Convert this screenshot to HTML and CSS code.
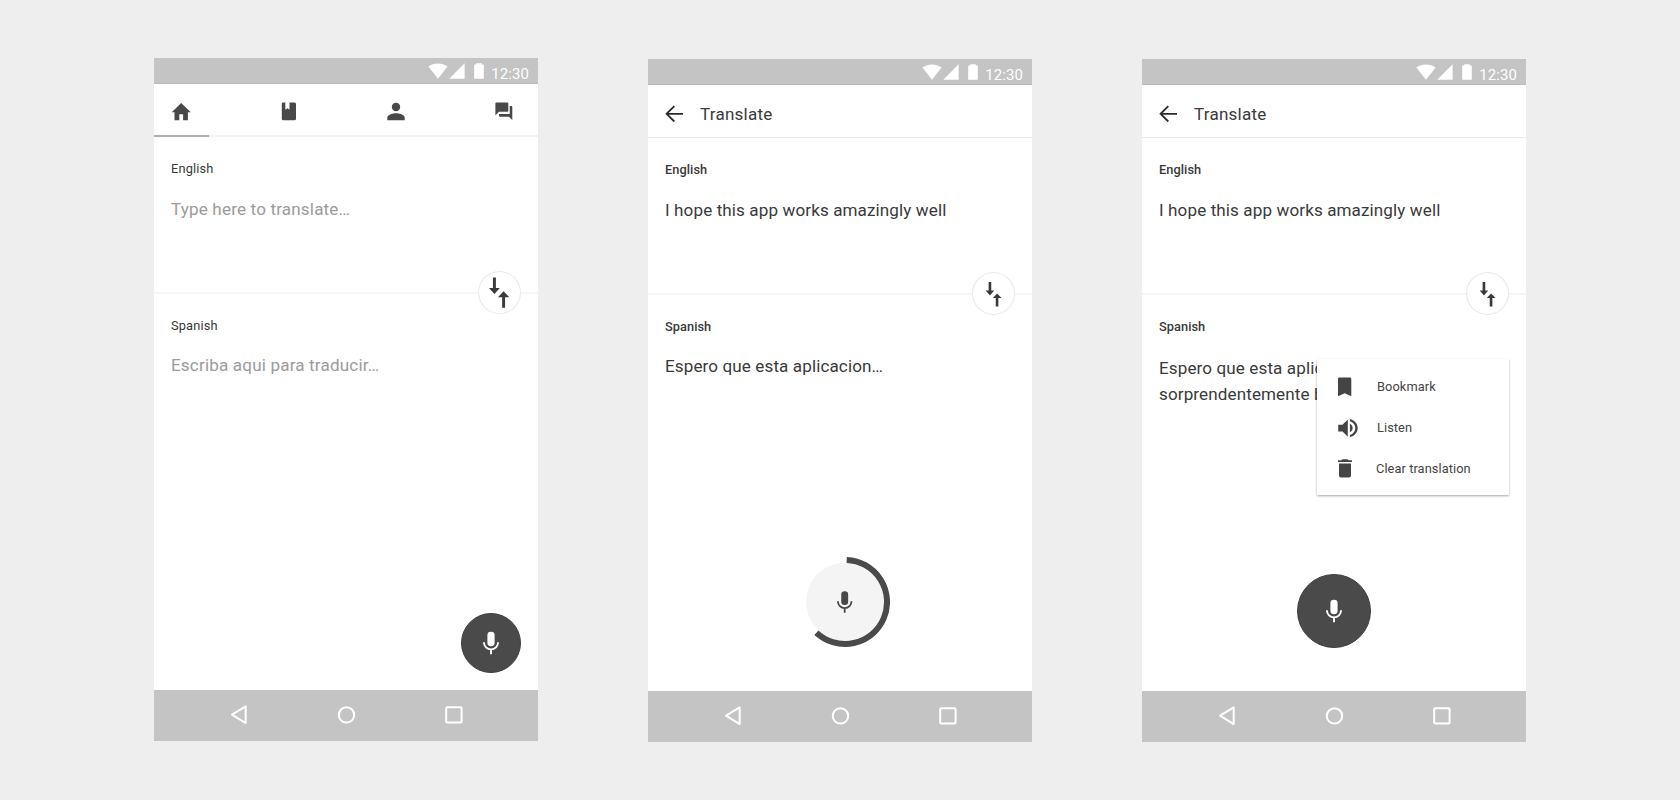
FILE: index.html
```html
<!DOCTYPE html>
<html lang="en">
<head>
<meta charset="utf-8">
<title>Translate</title>
<link rel="stylesheet" href="styles.css">
</head>
<body>
<svg class="sprite" aria-hidden="true">
  <symbol id="wifi" viewBox="0 0 20 16"><path d="M10 15.800 0.400 3.600C3.200 1.500 6.400 0.500 10 0.500s6.800 1 9.600 3.100z"/></symbol>
  <symbol id="signal" viewBox="0 0 16 16"><path d="M15.600 0.300V15.800H0.300z"/></symbol>
  <symbol id="battery" viewBox="0 0 10 16"><path d="M2.300 0.200h5.400v1.200h2.100v14.400H.2V1.400h2.100z"/></symbol>
  <symbol id="mic" viewBox="0 0 24 24">
    <rect x="8.400" y="0.800" width="7.200" height="14.400" rx="3.400" fill="currentColor"/>
    <path d="M4.900 11.300a7.100 7.100 0 0 0 14.200 0M12 18.400V23.200" fill="none" stroke="currentColor" stroke-width="1.900"/>
  </symbol>
  <symbol id="swap" viewBox="0 0 44 44"><path d="M17 10.300h2.700V19h3L18.400 24 14 19h3zM24.300 35.300V26.700h-3L25.700 22l4.500 4.700H27v8.600z"/></symbol>
  <symbol id="swap-large" viewBox="0 0 44 44"><path d="M15.300 6.700h3V17.500h4L16.800 23.500 11.300 17.500h4zM24.700 37.700V26.800h-4.300L26.200 20.700 32 26.800h-4.300v10.900z"/></symbol>
  <symbol id="back" viewBox="0 0 18 18"><path d="M9.300 1.100 1.600 8.800l7.700 7.700M1.600 8.800H18" fill="none" stroke="currentColor" stroke-width="1.800"/></symbol>
  <symbol id="nav-back" viewBox="0 0 24 24"><path d="M18.700 3.300v16.800L5 11.700z"/></symbol>
  <symbol id="nav-home" viewBox="0 0 24 24"><circle cx="11.500" cy="11.900" r="7.700"/></symbol>
  <symbol id="nav-recent" viewBox="0 0 24 24"><rect x="4.200" y="4.200" width="15.400" height="15.400" rx="1"/></symbol>
</svg>

<main class="board">
  <section class="phone phone-first">
    <div class="status">
      <svg class="wifi"><use href="#wifi"/></svg><svg class="signal"><use href="#signal"/></svg><svg class="battery"><use href="#battery"/></svg>
      <span class="time">12:30</span>
    </div>
    <div class="tabs">
      <svg class="tab" viewBox="0 0 24 24"><path d="M10.300 20.200V14.200h3.800v6h4.800v-8h2.900L12.200 2.900 2.700 12.200h2.800v8z"/></svg>
      <svg class="tab" viewBox="0 0 24 24"><path d="M5.900 2.500H8.300V9.800L10.400 8.200 12.500 9.800V2.500H17.500q1.500 0 1.500 1.500V18.700q0 1.500-1.500 1.500H6.300q-1.500 0-1.500-1.500V4q0-1.300 1.100-1.500z"/></svg>
      <svg class="tab" viewBox="0 0 24 24"><circle cx="12" cy="7" r="4.200"/><path d="M12 13.300c-2.900 0-8.700 1.400-8.700 4.300v2.600h17.400v-2.600c0-2.900-5.800-4.300-8.700-4.300z"/></svg>
      <svg class="tab" viewBox="0 0 24 24"><path d="M4.200 2.500H15.500q.8 0 .8.800V11q0 .8-.8.800H7L3.400 15.300V3.300q0-.8.8-.8zM17.700 6H19.400q.9 0 .9.900V19.900L16.900 16.700H7.900q-.9 0-.9-.9V13.900H17.700z"/></svg>
    </div>
    <div class="indicator"></div>
    <div class="pane source">
      <h2 class="label">English</h2>
      <p class="text hint">Type here to translate…</p>
      <div class="swap"><svg><use href="#swap-large"/></svg></div>
    </div>
    <div class="pane target">
      <h2 class="label">Spanish</h2>
      <p class="text hint">Escriba aqui para traducir…</p>
    </div>
    <div class="action action-corner"><div class="fab"><svg class="mic"><use href="#mic"/></svg></div></div>
    <div class="navbar"><svg><use href="#nav-back"/></svg><svg><use href="#nav-home"/></svg><svg><use href="#nav-recent"/></svg></div>
  </section>

  <section class="phone">
    <div class="status">
      <svg class="wifi"><use href="#wifi"/></svg><svg class="signal"><use href="#signal"/></svg><svg class="battery"><use href="#battery"/></svg>
      <span class="time">12:30</span>
    </div>
    <header class="appbar"><svg class="back"><use href="#back"/></svg><h1 class="title">Translate</h1></header>
    <div class="pane source">
      <h2 class="label">English</h2>
      <p class="text">I hope this app works amazingly well</p>
      <div class="swap"><svg><use href="#swap"/></svg></div>
    </div>
    <div class="pane target">
      <h2 class="label">Spanish</h2>
      <p class="text">Espero que esta aplicacion…</p>
    </div>
    <div class="action action-listening">
      <svg class="progress" viewBox="0 0 90 90">
        <circle cx="45" cy="44.700" r="39" fill="#f4f4f4"/>
        <path d="M46.700 3A42 42 0 1 1 16.400 75.700" fill="none" stroke="#4a4a4a" stroke-width="6"/>
        <use href="#mic" x="33.200" y="33.500" width="23" height="23"/>
      </svg>
    </div>
    <div class="navbar"><svg><use href="#nav-back"/></svg><svg><use href="#nav-home"/></svg><svg><use href="#nav-recent"/></svg></div>
  </section>

  <section class="phone">
    <div class="status">
      <svg class="wifi"><use href="#wifi"/></svg><svg class="signal"><use href="#signal"/></svg><svg class="battery"><use href="#battery"/></svg>
      <span class="time">12:30</span>
    </div>
    <header class="appbar"><svg class="back"><use href="#back"/></svg><h1 class="title">Translate</h1></header>
    <div class="pane source">
      <h2 class="label">English</h2>
      <p class="text">I hope this app works amazingly well</p>
      <div class="swap"><svg><use href="#swap"/></svg></div>
    </div>
    <div class="pane target">
      <h2 class="label">Spanish</h2>
      <p class="text text-result">Espero que esta aplicacion<br>sorprendentemente bien</p>
    </div>
    <div class="action action-center"><div class="fab fab-large"><svg class="mic"><use href="#mic"/></svg></div></div>
    <div class="navbar"><svg><use href="#nav-back"/></svg><svg><use href="#nav-home"/></svg><svg><use href="#nav-recent"/></svg></div>
    <ul class="menu">
      <li class="menu-item"><svg viewBox="0 0 22 22"><path d="M2.500 1.500h10.500q1.300 0 1.300 1.300V20.300L7.700 17.300 1 20.300V2.800q0-1.300 1.500-1.300z"/></svg>Bookmark</li>
      <li class="menu-item"><svg viewBox="0 0 22 22"><path d="M1.200 7.700v6.800h4.300l5.300 5.300V2.400L5.500 7.700zM12.900 6.800v8.600c1.700-.8 2.800-2.400 2.800-4.300s-1.100-3.500-2.800-4.300zM12.900 2v2.200c3.200.9 5.400 3.600 5.400 6.900s-2.200 6-5.400 6.900v2.200c4.500-1 7.800-4.700 7.800-9.100s-3.300-8.100-7.800-9.100z"/></svg>Listen</li>
      <li class="menu-item"><svg viewBox="0 0 22 22"><path d="M2 5.400h12V17.600q0 1.900-1.900 1.900H3.900q-1.900 0-1.900-1.900zM15 2.200v1.800H1V2.200h3.500l1-1h5l1 1z"/></svg><span class="nudge">Clear translation</span></li>
    </ul>
  </section>
</main>
</body>
</html>
```
FILE: styles.css
```css
* { box-sizing: border-box; margin: 0; padding: 0; }

body {
  background: #eee;
  color: #3a3a3a;
  font-family: Roboto, "Liberation Sans", sans-serif;
}

svg { display: block; flex: none; fill: currentColor; }
.sprite { display: none; }

.board {
  display: flex;
  justify-content: center;
  align-items: flex-start;
  gap: 110px;
  height: 800px;
  padding-top: 59px;
}

.phone {
  position: relative;
  display: flex;
  flex-direction: column;
  width: 384px;
  height: 683px;
  background: #fff;
}
.phone-first { margin-top: -1px; }

.status {
  display: flex;
  align-items: center;
  height: 26px;
  padding: 0 9px 0 274px;
  background: #c4c4c4;
  border-bottom: 1px solid #bababa;
  color: #fff;
}
.wifi { width: 20px; height: 16px; }
.signal { width: 16px; height: 16px; margin-left: 1px; }
.battery { width: 10px; height: 16px; margin-left: 9px; }
.time {
  margin-left: auto;
  padding-top: 6px;
  font-size: 14.930px;
  line-height: 18px;
  letter-spacing: 0.100px;
}

.tabs {
  display: flex;
  justify-content: space-between;
  align-items: center;
  height: 51px;
  padding: 5px 22px 0 15px;
  color: #484848;
}
.tab { width: 24px; height: 24px; }
.indicator {
  height: 2px;
  background: linear-gradient(to right, #b0b0b0 55.500px, #f3f3f3 55.500px);
}

.appbar {
  display: flex;
  align-items: center;
  gap: 17px;
  height: 53px;
  padding: 6px 17px 0;
  border-bottom: 1px solid #eaeaea;
}
.back { width: 18px; height: 18px; margin-top: -1px; color: #2c2c2c; }
.title { margin-top: -1px; font-size: 17.070px; font-weight: 400; line-height: 24px; letter-spacing: 0.220px; }

.pane { padding: 24px 17px 0; }
.source { position: relative; height: 157px; border-bottom: 2px solid #f6f6f6; }
.target { flex: 1; }
.label { margin-bottom: 20px; font-size: 12.800px; font-weight: 500; line-height: 16px; letter-spacing: 0.050px; }
.target .label { margin-bottom: 19px; }
.phone-first .label { font-weight: 400; letter-spacing: 0.150px; }
.text { font-size: 17.070px; line-height: 24px; letter-spacing: 0.110px; white-space: nowrap; }
.hint { color: #9b9b9b; letter-spacing: 0.170px; }
.text-result { padding-top: 1px; line-height: 26px; }

.swap {
  position: absolute;
  right: 17px;
  bottom: -22px;
  width: 43px;
  height: 43px;
  border-radius: 50%;
  background: #fff;
  box-shadow: inset 0 0 0 1px #e8e8e8;
}
.swap svg { width: 43px; height: 43px; }

.action { display: flex; color: #fff; }
.action-corner { justify-content: flex-end; padding: 0 17px 17px; }
.action-center { justify-content: center; padding-bottom: 43.500px; }
.action-listening { justify-content: center; padding: 0 0 44px 10px; color: #484848; }
.progress { width: 90px; height: 90px; }
.fab {
  display: grid;
  place-items: center;
  width: 60px;
  height: 60px;
  border: 1px solid #404040;
  border-radius: 50%;
  background: #4a4a4a;
}
.fab-large { width: 74px; height: 74px; }
.mic { width: 24px; height: 24px; }

.navbar {
  display: flex;
  justify-content: space-between;
  align-items: center;
  height: 51px;
  padding: 0 72px 1px 73px;
  background: #c4c4c4;
}
.navbar svg { width: 24px; height: 24px; fill: none; stroke: #fff; stroke-width: 2; stroke-linejoin: round; }

.menu {
  position: absolute;
  left: 175px;
  top: 300px;
  width: 192px;
  height: 136px;
  padding: 7px 20px;
  background: #fff;
  box-shadow: 0 1px 2px rgba(0, 0, 0, 0.350);
  list-style: none;
}
.menu-item {
  display: flex;
  align-items: center;
  gap: 18px;
  height: 41px;
  color: #444;
  font-size: 12.800px;
  line-height: 16px;
  letter-spacing: 0.080px;
}
.menu-item svg { width: 22px; height: 22px; }
.nudge { margin-left: -1px; }
```
